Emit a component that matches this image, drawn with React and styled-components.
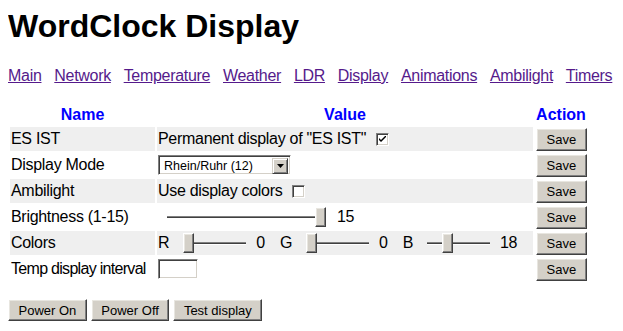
import styled, { createGlobalStyle } from "styled-components";

const GlobalStyle = createGlobalStyle`
  body {
    margin: 8px;
    background: #fff;
    color: #000;
    font-family: "Liberation Sans", Arial, sans-serif;
  }
`;

const Title = styled.h1`
  margin: 0;
  font-size: 32px;
  font-weight: bold;
`;

const Nav = styled.nav`
  display: flex;
  gap: 12.8px;
  margin-top: 22px;
  font-size: 16px;
  letter-spacing: -0.3px;
`;

const NavLink = styled.a`
  color: #551a8b;
  text-decoration: underline;
`;

const Table = styled.table`
  border-collapse: separate;
  border-spacing: 2px;
  table-layout: fixed;
  width: 581px;
  margin-top: 13px;
  font-size: 16px;
`;

const HeadCell = styled.th`
  height: 24px;
  padding: 0 1px 1px;
  vertical-align: bottom;
  text-align: center;
  color: #0000ff;
  font-weight: bold;
`;

const NameCell = styled.td`
  height: 24px;
  padding: 0 1px;
  white-space: nowrap;
  background: ${({ $shade }) => ($shade ? "#efefef" : "transparent")};
  letter-spacing: ${({ $tight }) => ($tight ? "-0.7px" : "-0.3px")};
`;

const ValueCell = styled.td`
  height: 24px;
  padding: 0 1px;
  background: ${({ $shade }) => ($shade ? "#efefef" : "transparent")};
  letter-spacing: -0.3px;
`;

const ActionCell = styled.td`
  height: 24px;
  padding: 0 1px;
`;

const ValueLine = styled.div`
  display: flex;
  align-items: center;
  white-space: nowrap;
`;

const Checkbox = styled.span`
  display: flex;
  align-items: center;
  justify-content: center;
  width: 13px;
  height: 13px;
  box-sizing: border-box;
  margin-left: 10px;
  background: #fff;
  border: 1px solid;
  border-color: #808080 #fff #fff #808080;
  box-shadow: inset 1px 1px #404040, inset -1px -1px #d4d0c8;
`;

const SelectBox = styled.div`
  display: flex;
  width: 133px;
  height: 20px;
  box-sizing: border-box;
  padding: 2px;
  background: #fff;
  border: 1px solid;
  border-color: #808080 #fff #fff #808080;
  box-shadow: inset 1px 1px #404040, inset -1px -1px #d4d0c8;
`;

const Select = styled.select`
  flex: 1;
  min-width: 0;
  height: 16px;
  margin: 0;
  padding: 0 0 0 3px;
  border: 0;
  outline: none;
  background: transparent;
  appearance: none;
  -webkit-appearance: none;
  font: 12.5px "Liberation Sans", Arial, sans-serif;
  color: #000;
`;

const ArrowButton = styled.span`
  display: flex;
  align-items: center;
  justify-content: center;
  width: 16px;
  height: 16px;
  box-sizing: border-box;
  background: #d4d0c8;
  border: 1px solid;
  border-color: #d4d0c8 #404040 #404040 #d4d0c8;
  box-shadow: inset 1px 1px #fff, inset -1px -1px #808080;
`;

const Range = styled.input.attrs({ type: "range" })`
  -webkit-appearance: none;
  appearance: none;
  width: ${({ $width }) => $width}px;
  height: 20px;
  margin: 0 0 0 ${({ $offset }) => $offset || 0}px;
  padding: 0;
  background: transparent;

  &::-webkit-slider-runnable-track {
    height: 3px;
    background: linear-gradient(#808080 0 1px, #404040 1px 2px, #ffffff 2px 3px);
  }

  &::-webkit-slider-thumb {
    -webkit-appearance: none;
    width: 11px;
    height: 20px;
    box-sizing: border-box;
    margin-top: -8.5px;
    background: #d4d0c8;
    border: 1px solid;
    border-color: #fff #404040 #404040 #fff;
    box-shadow: inset -1px -1px #808080, inset 1px 1px #e8e6e0;
  }
`;

const RangeValue = styled.span`
  margin-left: ${({ $gap }) => $gap}px;
`;

const ColorGroup = styled.span`
  display: flex;
  align-items: center;
  margin-right: 15px;

  & > input {
    margin: 0 10px 0 14px;
  }
`;

const TextInput = styled.input`
  width: 40px;
  height: 20px;
  box-sizing: border-box;
  margin: 0;
  padding: 0 2px;
  background: #fff;
  border: 1px solid;
  border-color: #808080 #fff #fff #808080;
  box-shadow: inset 1px 1px #404040, inset -1px -1px #d4d0c8;
  outline: none;
`;

const Button = styled.button`
  height: ${({ $tall }) => ($tall ? 23 : 22)}px;
  margin: 0;
  padding: 0 9.5px;
  background: #d4d0c8;
  border: 1px solid;
  border-color: #fff #404040 #404040 #fff;
  box-shadow: inset -1px -1px #808080, inset 1px 1px #e8e6e0;
  color: #000;
  font: 13px "Liberation Sans", Arial, sans-serif;
  white-space: nowrap;
`;

const Footer = styled.div`
  display: flex;
  gap: 4px;
  margin-top: 16px;
`;

const links = [
  "Main",
  "Network",
  "Temperature",
  "Weather",
  "LDR",
  "Display",
  "Animations",
  "Ambilight",
  "Timers",
];

const colors = [
  { label: "R", value: 0 },
  { label: "G", value: 0 },
  { label: "B", value: 18 },
];

const Check = () => (
  <svg width="7" height="7" viewBox="0 0 7 7">
    <path d="M0 2 L0 4 L2 6 L7 1 L7 -1 L2 4 Z" fill="#000" />
  </svg>
);

const Row = ({ name, shade, tight, children }) => (
  <tr>
    <NameCell $shade={shade} $tight={tight}>
      {name}
    </NameCell>
    <ValueCell $shade={shade}>
      <ValueLine>{children}</ValueLine>
    </ValueCell>
    <ActionCell>
      <Button $tall>Save</Button>
    </ActionCell>
  </tr>
);

export default function App() {
  return (
    <>
      <GlobalStyle />
      <Title>WordClock Display</Title>
      <Nav>
        {links.map((l) => (
          <NavLink key={l} href="#">
            {l}
          </NavLink>
        ))}
      </Nav>
      <Table>
        <colgroup>
          <col style={{ width: 145 }} />
          <col style={{ width: 376 }} />
          <col style={{ width: 52 }} />
        </colgroup>
        <thead>
          <tr>
            <HeadCell>Name</HeadCell>
            <HeadCell>Value</HeadCell>
            <HeadCell>Action</HeadCell>
          </tr>
        </thead>
        <tbody>
          <Row name="ES IST" shade>
            Permanent display of "ES IST"
            <Checkbox>
              <Check />
            </Checkbox>
          </Row>
          <Row name="Display Mode">
            <SelectBox>
              <Select defaultValue="12">
                <option value="12">Rhein/Ruhr (12)</option>
              </Select>
              <ArrowButton>
                <svg width="7" height="4" viewBox="0 0 7 4">
                  <path d="M0 0 H7 L3.5 4 Z" fill="#000" />
                </svg>
              </ArrowButton>
            </SelectBox>
          </Row>
          <Row name="Ambilight" shade>
            Use display colors
            <Checkbox />
          </Row>
          <Row name="Brightness (1-15)">
            <Range $width={159} $offset={9} min={1} max={15} defaultValue={15} />
            <RangeValue $gap={11}>15</RangeValue>
          </Row>
          <Row name="Colors" shade>
            {colors.map((c) => (
              <ColorGroup key={c.label}>
                {c.label}
                <Range $width={63} min={0} max={63} defaultValue={c.value} />
                {c.value}
              </ColorGroup>
            ))}
          </Row>
          <Row name="Temp display interval" tight>
            <TextInput type="text" />
          </Row>
        </tbody>
      </Table>
      <Footer>
        <Button>Power On</Button>
        <Button>Power Off</Button>
        <Button>Test display</Button>
      </Footer>
    </>
  );
}
